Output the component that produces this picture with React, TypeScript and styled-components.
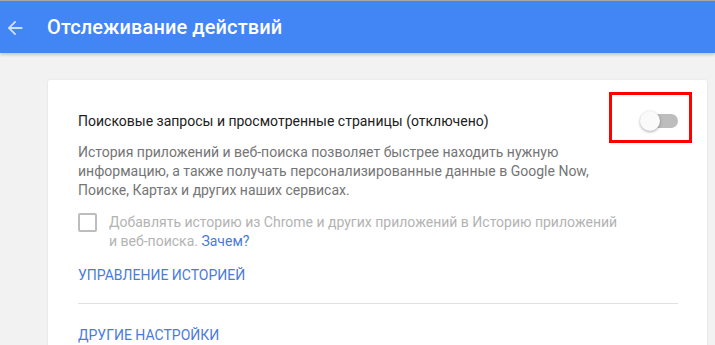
import React from 'react';
import styled, { createGlobalStyle } from 'styled-components';

const GlobalStyle = createGlobalStyle`
  html, body {
    margin: 0;
    padding: 0;
    background: #f2f2f2;
    font-family: Roboto, "Noto Sans", Arial, sans-serif;
  }
`;

const Page = styled.div`
  width: 715px;
  height: 345px;
  overflow: hidden;
  border-top: 1px solid #a7a7a7;
  box-sizing: border-box;
`;

const Header = styled.header`
  height: 52px;
  background: #4285f4;
  display: flex;
  align-items: center;
  box-shadow: 0 2px 3px rgba(0, 0, 0, 0.18);
  position: relative;
  z-index: 1;
`;

const BackButton = styled.span`
  width: 47px;
  display: flex;
  align-items: center;
  padding-left: 4px;
  box-sizing: border-box;
  margin-top: 1px;
`;

const Title = styled.h1`
  margin: 0;
  font-size: 20px;
  font-weight: 500;
  color: #fff;
  letter-spacing: 0.1px;
`;

const Main = styled.main`
  padding: 27px 8px 0 48px;
`;

const Card = styled.section`
  background: #fff;
  border-radius: 2px;
  box-shadow: 0 0 2px rgba(0, 0, 0, 0.08), 0 1px 2px rgba(0, 0, 0, 0.06);
  padding: 31px 29px 20px 30px;
`;

const SettingRow = styled.div`
  display: flex;
  align-items: center;
  justify-content: space-between;
`;

const SettingTitle = styled.div`
  font-size: 14px;
  line-height: 20px;
  color: #212121;
`;

const Description = styled.p`
  margin: 12px 0 0;
  font-size: 14px;
  line-height: 19px;
  color: #757575;
  white-space: nowrap;
`;

const ToggleWrap = styled.div`
  position: relative;
  width: 38px;
  height: 20px;
`;

const Track = styled.div`
  position: absolute;
  left: 8px;
  right: 0;
  top: 3px;
  height: 14px;
  border-radius: 7px;
  background: #bdbdbd;
`;

const Thumb = styled.div`
  position: absolute;
  left: 0;
  top: 0;
  width: 20px;
  height: 20px;
  border-radius: 50%;
  background: #fafafa;
  box-shadow: 0 1px 3px rgba(0, 0, 0, 0.35);
`;

const Highlight = styled.div`
  position: absolute;
  left: -31px;
  top: -19px;
  width: 83px;
  height: 51px;
  border: 3px solid #f00;
  box-sizing: border-box;
`;

const CheckRow = styled.label`
  display: flex;
  align-items: flex-start;
  margin-top: 13px;
`;

const Box = styled.span`
  flex: none;
  width: 19px;
  height: 19px;
  border: 2px solid #bdbdbd;
  border-radius: 2px;
  box-sizing: border-box;
`;

const CheckText = styled.span`
  margin-left: 12px;
  font-size: 14px;
  line-height: 19px;
  color: #b3b3b3;
  white-space: nowrap;
`;

const InlineLink = styled.a`
  color: #4a7bd8;
  text-decoration: none;
`;

const ActionLink = styled.a<{ top: number }>`
  display: block;
  margin-top: ${({ top }) => top}px;
  font-size: 14px;
  line-height: 20px;
  color: #4a7bd8;
  text-transform: uppercase;
  text-decoration: none;
`;

const Divider = styled.hr`
  border: none;
  border-top: 1px solid #e0e0e0;
  margin: 18px 0 0;
`;

const ArrowIcon = () => (
  <svg width="22" height="22" viewBox="0 0 24 24">
    <path
      d="M20 11H7.83l5.59-5.59L12 4l-8 8 8 8 1.41-1.41L7.83 13H20v-2z"
      fill="rgba(255,255,255,0.75)"
    />
  </svg>
);

const App: React.FC = () => {
  return (
    <Page>
      <GlobalStyle />
      <Header>
        <BackButton>
          <ArrowIcon />
        </BackButton>
        <Title>Отслеживание действий</Title>
      </Header>
      <Main>
        <Card>
          <SettingRow>
            <SettingTitle>Поисковые запросы и просмотренные страницы (отключено)</SettingTitle>
            <ToggleWrap>
              <Track />
              <Thumb />
              <Highlight />
            </ToggleWrap>
          </SettingRow>
          <Description>
            История приложений и веб-поиска позволяет быстрее находить нужную
            <br />
            информацию, а также получать персонализированные данные в Google Now,
            <br />
            Поиске, Картах и других наших сервисах.
          </Description>
          <CheckRow>
            <Box />
            <CheckText>
              Добавлять историю из Chrome и других приложений в Историю приложений
              <br />
              и веб-поиска. <InlineLink>Зачем?</InlineLink>
            </CheckText>
          </CheckRow>
          <ActionLink top={14}>Управление историей</ActionLink>
          <Divider />
          <ActionLink top={21}>Другие настройки</ActionLink>
        </Card>
      </Main>
    </Page>
  );
};

export default App;
